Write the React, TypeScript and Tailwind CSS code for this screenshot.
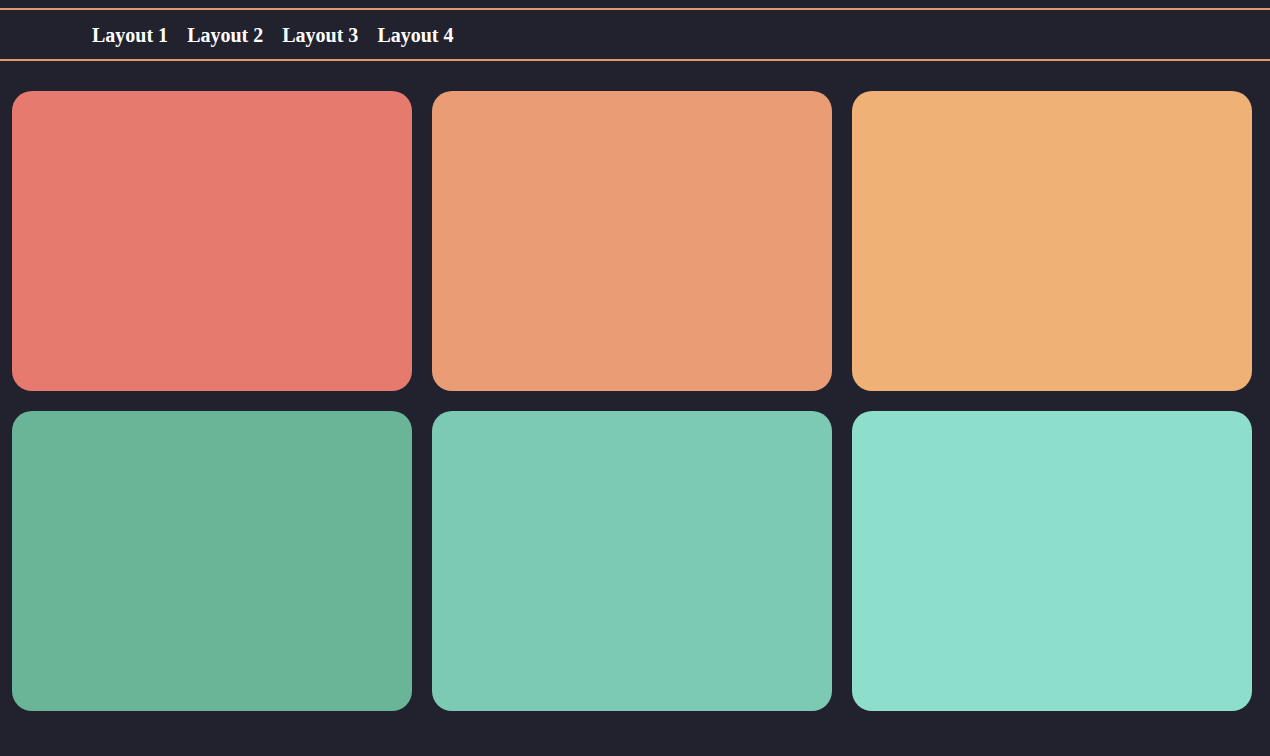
const cards = [
  "bg-[#e67a6e]",
  "bg-[#ea9d74]",
  "bg-[#efb176]",
  "bg-[#6ab597]",
  "bg-[#7ccab3]",
  "bg-[#8ddfcc]",
];

export default function App() {
  return (
    <div className="min-h-[756px] bg-[#22222e] pt-2 font-['Liberation_Serif',serif]">
      <nav className="flex h-[53px] items-center gap-[19px] border-y-2 border-[#e9976f] pl-[92px]">
        {["Layout 1", "Layout 2", "Layout 3", "Layout 4"].map((label) => (
          <a key={label} href="#" className="text-xl font-bold text-white">
            {label}
          </a>
        ))}
      </nav>
      <main className="grid grid-cols-[repeat(3,400px)] gap-5 px-3 pt-[30px]">
        {cards.map((bg) => (
          <div key={bg} className={`h-[300px] rounded-[20px] ${bg}`} />
        ))}
      </main>
    </div>
  );
}
